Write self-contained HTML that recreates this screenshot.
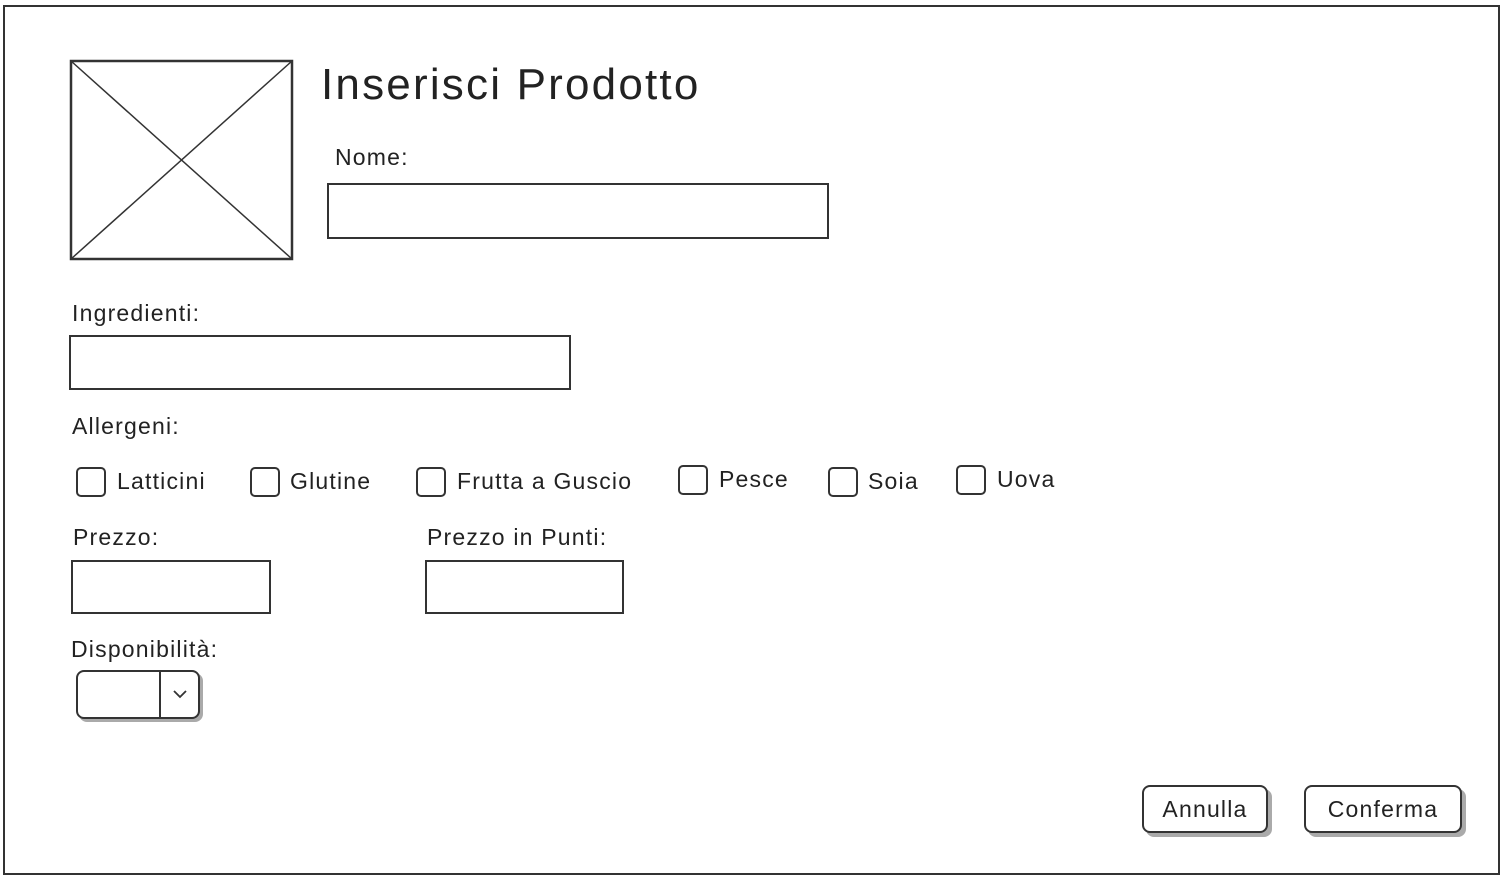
<!DOCTYPE html>
<html><head><meta charset="utf-8"><style>
html,body{margin:0;padding:0;background:#fff;}
body{width:1504px;height:878px;position:relative;overflow:hidden;font-family:"Liberation Sans",sans-serif;color:#222;}
.a{position:absolute;}
.box{position:absolute;border:2px solid #333;box-sizing:border-box;background:#fff;}
.lbl{position:absolute;font-size:23px;line-height:26px;white-space:nowrap;letter-spacing:1.2px;}
.cb{position:absolute;width:30px;height:30px;border:2px solid #333;border-radius:5px;box-sizing:border-box;}
.btn{position:absolute;border:2px solid #333;border-radius:8px;box-sizing:border-box;background:#fff;box-shadow:4px 4px 0 #aaa;font-size:23px;letter-spacing:1.2px;text-align:center;}
</style></head><body>
<div class="box" style="left:3px;top:5px;width:1497px;height:870px;"></div>
<svg class="a" style="left:0;top:0" width="1504" height="878">
<rect x="71" y="61" width="221" height="198" fill="none" stroke="#333" stroke-width="2.5"/>
<line x1="71" y1="61" x2="292" y2="259" stroke="#333" stroke-width="1.5"/>
<line x1="292" y1="61" x2="71" y2="259" stroke="#333" stroke-width="1.5"/>
</svg>
<div class="lbl" style="left:321px;top:59px;font-size:44px;line-height:52px;letter-spacing:2.2px;">Inserisci Prodotto</div>
<div class="lbl" style="left:335px;top:144px;">Nome:</div>
<div class="box" style="left:327px;top:183px;width:502px;height:56px;"></div>
<div class="lbl" style="left:72px;top:300px;">Ingredienti:</div>
<div class="box" style="left:69px;top:335px;width:502px;height:55px;"></div>
<div class="lbl" style="left:72px;top:413px;">Allergeni:</div>
<div class="cb" style="left:76px;top:467px;"></div><div class="lbl" style="left:117px;top:468px;">Latticini</div>
<div class="cb" style="left:250px;top:467px;"></div><div class="lbl" style="left:290px;top:468px;">Glutine</div>
<div class="cb" style="left:416px;top:467px;"></div><div class="lbl" style="left:457px;top:468px;">Frutta a Guscio</div>
<div class="cb" style="left:678px;top:465px;"></div><div class="lbl" style="left:719px;top:466px;">Pesce</div>
<div class="cb" style="left:828px;top:467px;"></div><div class="lbl" style="left:868px;top:468px;">Soia</div>
<div class="cb" style="left:956px;top:465px;"></div><div class="lbl" style="left:997px;top:466px;">Uova</div>
<div class="lbl" style="left:73px;top:524px;">Prezzo:</div>
<div class="box" style="left:71px;top:560px;width:200px;height:54px;"></div>
<div class="lbl" style="left:427px;top:524px;">Prezzo in Punti:</div>
<div class="box" style="left:425px;top:560px;width:199px;height:54px;"></div>
<div class="lbl" style="left:71px;top:636px;">Disponibilità:</div>
<div class="btn" style="left:76px;top:670px;width:124px;height:49px;box-shadow:3px 3px 0 #aaa;"></div>
<svg class="a" style="left:0;top:0" width="1504" height="878">
<line x1="160" y1="671" x2="160" y2="718" stroke="#333" stroke-width="2"/>
<polyline points="174,691 180,697 186,691" fill="none" stroke="#333" stroke-width="1.8"/>
</svg>
<div class="btn" style="left:1142px;top:785px;width:126px;height:48px;line-height:44px;">Annulla</div>
<div class="btn" style="left:1304px;top:785px;width:158px;height:48px;line-height:44px;">Conferma</div>
</body></html>
